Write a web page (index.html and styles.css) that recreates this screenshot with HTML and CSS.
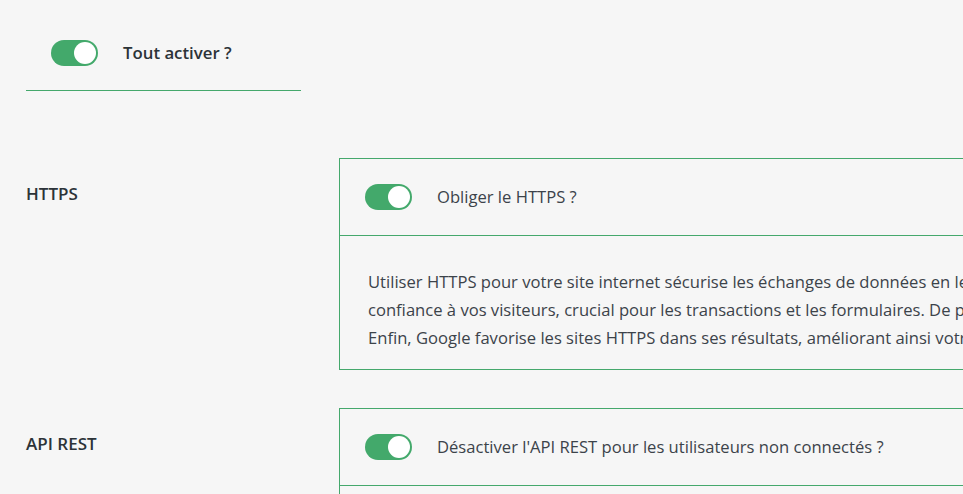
FILE: index.html
```html
<!DOCTYPE html>
<html lang="fr">
<head>
<meta charset="utf-8">
<title>Réglages</title>
<link rel="stylesheet" href="styles.css">
</head>
<body>
<div class="page">
  <div class="master">
    <div class="master-row">
      <span class="switch" role="switch" aria-checked="true"></span>
      <span class="master-label">Tout activer ?</span>
    </div>
  </div>

  <div class="setting">
    <div class="setting-name">HTTPS</div>
    <div class="card">
      <div class="card-head">
        <span class="switch" role="switch" aria-checked="true"></span>
        <span class="card-title">Obliger le HTTPS ?</span>
      </div>
      <div class="card-body">
        <p>Utiliser HTTPS pour votre site internet sécurise les échanges de données en les chiffrant, ce qui inspire<br>confiance à vos visiteurs, crucial pour les transactions et les formulaires. De plus, les navigateurs le recommandent.<br>Enfin, Google favorise les sites HTTPS dans ses résultats, améliorant ainsi votre référencement naturel.</p>
      </div>
    </div>
  </div>

  <div class="setting">
    <div class="setting-name">API REST</div>
    <div class="card">
      <div class="card-head">
        <span class="switch" role="switch" aria-checked="true"></span>
        <span class="card-title">Désactiver l'API REST pour les utilisateurs non connectés ?</span>
      </div>
      <div class="card-body">
        <p>Désactiver l'API REST pour les visiteurs non connectés limite l'exposition des données de votre site,<br>comme la liste des utilisateurs, et réduit la surface d'attaque face aux robots malveillants.</p>
      </div>
    </div>
  </div>
</div>
</body>
</html>
```

FILE: styles.css
```css
html {
  overflow: hidden;
}

body {
  margin: 0;
  background: #f6f6f6;
  font-family: "Open Sans", "Noto Sans", sans-serif;
  font-size: 16.6px;
  color: #3c434a;
}

.page {
  padding-left: 26px;
  width: 1400px;
}

.master {
  width: 275px;
  border-bottom: 1px solid #45a86c;
}

.master-row {
  display: flex;
  align-items: center;
  gap: 25px;
  padding: 40px 0 24px 25px;
}

.master-label {
  font-size: 16.8px;
  font-weight: 600;
  color: #2c3338;
  line-height: 26px;
}

.switch {
  position: relative;
  flex: none;
  display: inline-block;
  width: 47px;
  height: 26px;
  border-radius: 13px;
  background: #43a96b;
}

.switch::after {
  content: "";
  position: absolute;
  top: 2px;
  right: 2px;
  width: 22px;
  height: 22px;
  border-radius: 50%;
  background: #fff;
}

.setting {
  display: grid;
  grid-template-columns: 313px 950px;
  margin-top: 38px;
}

.master + .setting {
  margin-top: 67px;
}

.setting-name {
  padding-top: 22px;
  font-size: 17px;
  font-weight: 600;
  color: #2c3338;
  line-height: 28px;
}

.card {
  border: 1px solid #45a86c;
}

.card-head {
  display: flex;
  align-items: center;
  gap: 25px;
  height: 76px;
  padding-left: 25px;
  border-bottom: 1px solid #45a86c;
}

.card-title {
  line-height: 26px;
}

.card-body {
  padding: 32px 28px 17px;
}

.card-body p {
  margin: 0;
  line-height: 28px;
  white-space: nowrap;
}
```
